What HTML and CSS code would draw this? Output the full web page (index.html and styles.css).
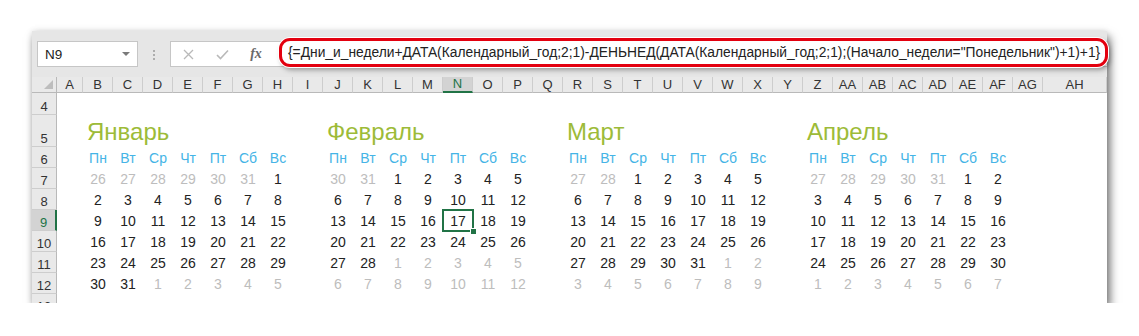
FILE: index.html
```html
<!DOCTYPE html>
<html lang="ru">
<head>
    <meta charset="UTF-8">
    <meta name="viewport" content="width=device-width, initial-scale=1.0">
    <title>Календарь</title>
    <link rel="stylesheet" href="styles.css">
</head>
<body>
    <div class="window">
        <div class="formula-bar">
            <div class="name-box">
                <span>N9</span>
                <span class="drop"></span>
            </div>
            <div class="grip"><span></span><span></span><span></span></div>
            <div class="fx-box">
                <span class="fx-btn">
                    <svg width="11" height="11" viewBox="0 0 11 11"><path d="M1 1L10 10M10 1L1 10" stroke="#b9b9b9" stroke-width="1.3" fill="none"/></svg>
                </span>
                <span class="fx-btn">
                    <svg width="13" height="11" viewBox="0 0 13 11"><path d="M1 6L4.5 9.5L12 1.5" stroke="#b9b9b9" stroke-width="1.6" fill="none"/></svg>
                </span>
                <span class="fx-btn fx-label">fx</span>
                <div class="formula">{=Дни_и_недели+ДАТА(Календарный_год;2;1)-ДЕНЬНЕД(ДАТА(Календарный_год;2;1);(Начало_недели="Понедельник")+1)+1}</div>
            </div>
        </div>
        <div class="sheet" id="sheet"></div>
    </div>
    <script src="script.js"></script>
</body>
</html>
```

FILE: styles.css
```css
body {
    margin: 0;
    background-color: #fff;
    font-family: "Liberation Sans", Arial, sans-serif;
    color: #222;
}
.window {
    margin: 31px 0 0 32px;
    width: 1075px;
    height: 272px;
    background-color: #e6e6e6;
    box-shadow: 3px 6px 9px rgba(0, 0, 0, 0.55), 0 0 6px rgba(0, 0, 0, 0.12);
    display: flex;
    flex-direction: column;
}
.formula-bar {
    height: 46px;
    flex: none;
    display: flex;
    align-items: flex-start;
    padding-top: 10px;
    box-sizing: border-box;
}
.name-box {
    margin-left: 5px;
    width: 101px;
    height: 26px;
    box-sizing: border-box;
    background-color: #fff;
    border: 1px solid #c6c6c6;
    display: flex;
    align-items: center;
    justify-content: space-between;
    padding: 0 7px 0 7px;
    font-size: 13.5px;
}
.drop {
    width: 0;
    height: 0;
    border-left: 4px solid transparent;
    border-right: 4px solid transparent;
    border-top: 4px solid #7a7a7a;
}
.grip {
    width: 32px;
    display: flex;
    flex-direction: column;
    align-items: center;
    gap: 2px;
    padding-top: 9px;
}
.grip span {
    width: 2px;
    height: 2px;
    background-color: #adadad;
}
.fx-box {
    flex: 1;
    height: 26px;
    box-sizing: border-box;
    background-color: #fff;
    border: 1px solid #c6c6c6;
    border-right: none;
    display: flex;
    align-items: center;
}
.fx-btn {
    width: 34px;
    height: 24px;
    display: flex;
    align-items: center;
    justify-content: center;
}
.fx-label {
    font-family: "Liberation Serif", serif;
    font-style: italic;
    font-weight: bold;
    font-size: 14px;
    color: #6a6a6a;
}
.formula {
    flex: 1;
    align-self: flex-end;
    height: 29px;
    box-sizing: border-box;
    margin: 0 -1px -1px 6px;
    border: 3px solid #e3000f;
    border-radius: 11px;
    box-shadow: 0 0 0 1px #fff, 2px 3px 5px rgba(0, 0, 0, 0.35);
    background-color: #fff;
    padding: 0 0 0 6px;
    display: flex;
    align-items: center;
    font-size: 13.8px;
    white-space: nowrap;
}
.sheet {
    flex: 1;
    overflow: hidden;
    background-color: #fff;
    display: grid;
    grid-template-columns: 25px 26px repeat(32, 30px) 1fr;
    grid-template-rows: 16px 22px 32px repeat(8, 21px);
}
.head {
    background-color: #e9e9e9;
    display: flex;
    align-items: flex-end;
    justify-content: center;
    font-size: 13px;
    line-height: 15px;
    color: #333;
    box-sizing: border-box;
}
.col-head {
    border-right: 1px solid #cdcdcd;
    border-bottom: 1px solid #b9b9b9;
}
.row-head {
    border-right: 1px solid #b9b9b9;
    border-bottom: 1px solid #cdcdcd;
}
.corner {
    border-right: 1px solid #b9b9b9;
    border-bottom: 1px solid #b9b9b9;
    justify-content: flex-end;
    padding: 0 3px 3px 0;
}
.corner span {
    width: 0;
    height: 0;
    border-left: 9px solid transparent;
    border-bottom: 9px solid #bdbdbd;
}
.head.active {
    background-color: #d3d3d3;
    color: #217346;
}
.col-head.active {
    border-bottom: 2px solid #217346;
}
.row-head.active {
    border-right: 2px solid #217346;
}
.cell {
    position: relative;
    display: flex;
    align-items: flex-end;
    justify-content: center;
    font-size: 14px;
    line-height: 16px;
    padding-bottom: 2px;
    box-sizing: border-box;
    white-space: nowrap;
}
.cell.title {
    justify-content: flex-start;
    padding-left: 4px;
    padding-bottom: 1px;
    font-size: 24px;
    line-height: 28px;
    color: #9dbb38;
}
.cell.wd {
    color: #45b4e6;
}
.cell.other {
    color: #bdbdbd;
}
.cell.selected {
    outline: 2px solid #217346;
    outline-offset: -1px;
}
.cell.selected::after {
    content: "";
    position: absolute;
    right: -3px;
    bottom: -3px;
    width: 5px;
    height: 5px;
    background-color: #217346;
    border: 1px solid #fff;
    border-width: 1px 0 0 1px;
}
```

FILE: script.js
```js
// Буквы столбцов A..AH
const letters = [];
for (let i = 0; i < 34; i++) {
    letters.push(i < 26 ? String.fromCharCode(65 + i) : 'A' + String.fromCharCode(39 + i));
}

const months = [
    { name: 'Январь', prev: [26, 31], days: 31 },
    { name: 'Февраль', prev: [30, 31], days: 28 },
    { name: 'Март', prev: [27, 28], days: 31 },
    { name: 'Апрель', prev: [27, 31], days: 30 }
];
const weekdays = ['Пн', 'Вт', 'Ср', 'Чт', 'Пт', 'Сб', 'Вс'];

// 6 недель по 7 дней, с днями соседних месяцев
function monthDays(m) {
    const list = [];
    for (let d = m.prev[0]; d <= m.prev[1]; d++) list.push({ n: d, other: true });
    for (let d = 1; d <= m.days; d++) list.push({ n: d, other: false });
    let d = 1;
    while (list.length < 42) list.push({ n: d++, other: true });
    return list;
}
const grids = months.map(monthDays);

const sheet = document.getElementById('sheet');

function add(cls, text) {
    const div = document.createElement('div');
    div.className = cls;
    if (text !== undefined) div.textContent = text;
    sheet.appendChild(div);
    return div;
}

// Заголовки столбцов
add('head corner').appendChild(document.createElement('span'));
letters.forEach(l => add('head col-head' + (l === 'N' ? ' active' : ''), l));

// Строки 4..13
for (let r = 4; r <= 13; r++) {
    add('head row-head' + (r === 9 ? ' active' : ''), r);
    for (let c = 0; c < 34; c++) {
        const m = Math.floor((c - 1) / 8);
        const k = (c - 1) % 8;
        const inMonth = c >= 1 && k < 7 && m < 4;
        let cls = 'cell';
        let text = '';

        if (inMonth && r === 5 && k === 0) {
            cls += ' title';
            text = months[m].name;
        } else if (inMonth && r === 6) {
            cls += ' wd';
            text = weekdays[k];
        } else if (inMonth && r >= 7 && r <= 12) {
            const day = grids[m][(r - 7) * 7 + k];
            if (day.other) cls += ' other';
            text = day.n;
        }
        if (r === 9 && c === 13) cls += ' selected';
        add(cls, text);
    }
}
```
